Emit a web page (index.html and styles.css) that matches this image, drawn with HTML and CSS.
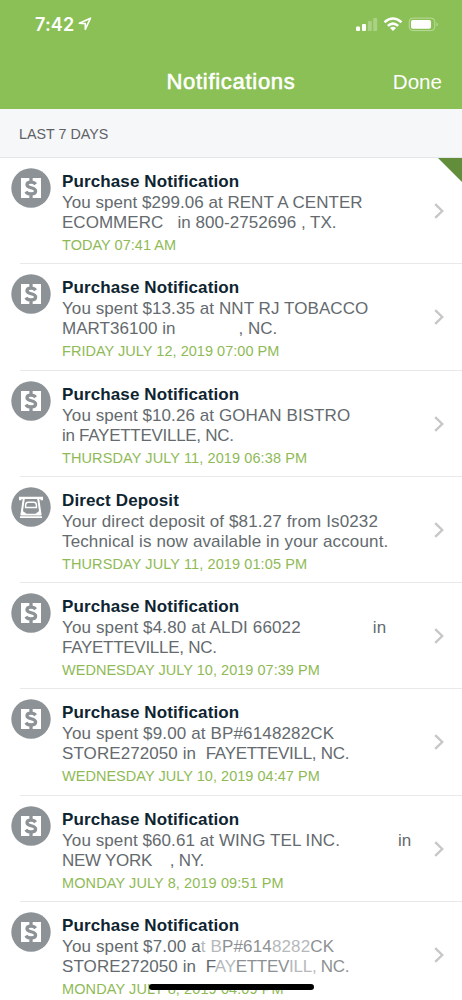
FILE: index.html
```html
<!DOCTYPE html>
<html lang="en">
<head>
<meta charset="utf-8">
<title>Notifications</title>
<link rel="stylesheet" href="styles.css">
</head>
<body>
<svg width="0" height="0" class="defs">
  <symbol id="purchase" viewBox="0 0 40 40">
    <circle cx="20" cy="20" r="19.7" fill="#8c9295"/>
    <path d="M10 10H30V30H10Z" fill="#fff"/>
    <path d="M24.6 16.2C23.5 14.6 22 14.1 20 14.1C17.6 14.1 16 15 16 16.8C16 20.6 24.6 18.9 24.6 23C24.6 25 22.6 26 20 26C17.6 26 15.9 25.2 14.9 23.6M20 9V14M20 26V31" fill="none" stroke="#8c9295" stroke-width="3.3"/>
  </symbol>
  <symbol id="deposit" viewBox="0 0 40 40">
    <circle cx="20" cy="20" r="19.7" fill="#8c9295"/>
    <path d="M8 9.7H32V13.2H29.5V12H10.5V13.2H8Z" fill="#fff"/>
    <path d="M12.8 11.5L10.4 28M27.2 11.5L29.6 28" stroke="#fff" stroke-width="2"/>
    <path d="M14.6 20.4V18Q14.8 15.2 17.2 15.2H22.8Q25.2 15.2 25.4 18V20.4Z" fill="none" stroke="#fff" stroke-width="1.5"/>
    <path d="M9.7 28.4L10.2 24.2H12.2L15.5 26.8H24.5L27.8 24.2H29.8L30.3 28.4ZM9 29.2H31V31H9Z" fill="#fff"/>
  </symbol>
  <symbol id="chevron" viewBox="0 0 10 16"><path d="M1.2 1.2L8.2 8L1.2 14.8" fill="none" stroke="#c7c7ca" stroke-width="2.4"/></symbol>
</svg>
<div class="screen">
  <header class="header">
    <div class="status">
      <span class="time">7:42</span>
      <svg class="location" viewBox="0 0 14 14"><path d="M1.3 6.3L12.5 1.2L7.3 12.3V6.6Z" fill="none" stroke="#fff" stroke-width="1.6" stroke-linejoin="round"/></svg>
      <svg class="indicators" viewBox="0 0 84 16">
        <g fill="#fff"><rect x="0" y="9.5" width="4" height="4.5" rx="1"/><rect x="6" y="7" width="4" height="7" rx="1"/>
        <g opacity=".28"><rect x="11.8" y="4" width="4" height="10" rx="1"/><rect x="17.2" y="1" width="4" height="13" rx="1"/></g></g>
        <g fill="none" stroke="#fff" stroke-width="2.5"><path d="M28.5 5.2Q37 -2.2 45.5 5.2"/><path d="M31.8 8.9Q37 4.3 42.2 8.9"/></g>
        <path d="M34 11Q37 8.5 40 11L37 14Z" fill="#fff"/>
        <rect x="53.2" y="1.1" width="25.6" height="12.5" rx="3.6" fill="none" stroke="#fff" opacity=".42"/>
        <rect x="55" y="3" width="20" height="8.8" rx="1.8" fill="#fff"/>
        <path d="M80.5 5.2Q83 7.4 80.5 9.6Z" fill="#fff" opacity=".45"/>
      </svg>
    </div>
    <div class="nav"><h1>Notifications</h1><span class="done">Done</span></div>
  </header>
  <h2 class="section">LAST 7 DAYS</h2>
  <main class="list">
    <article class="row unread"><svg class="icon"><use href="#purchase"/></svg><div class="copy"><h3>Purchase Notification</h3><p class="snug">You spent $299.06 at RENT A CENTER</p><p class="snug">ECOMMERC   in 800-2752696 , TX.</p><time>TODAY 07:41 AM</time></div><svg class="chevron"><use href="#chevron"/></svg></article>
    <article class="row"><svg class="icon"><use href="#purchase"/></svg><div class="copy"><h3>Purchase Notification</h3><p>You spent $13.35 at NNT RJ TOBACCO</p><p class="snug">MART36100 in<span class="gap town"></span>, NC.</p><time>FRIDAY JULY 12, 2019 07:00 PM</time></div><svg class="chevron"><use href="#chevron"/></svg></article>
    <article class="row"><svg class="icon"><use href="#purchase"/></svg><div class="copy"><h3>Purchase Notification</h3><p>You spent $10.26 at GOHAN BISTRO</p><p class="tight">in FAYETTEVILLE, NC.</p><time class="wide">THURSDAY JULY 11, 2019 06:38 PM</time></div><svg class="chevron"><use href="#chevron"/></svg></article>
    <article class="row"><svg class="icon"><use href="#deposit"/></svg><div class="copy"><h3>Direct Deposit</h3><p class="loose">Your direct deposit of $81.27 from Is0232</p><p class="loose">Technical is now available in your account.</p><time class="wide">THURSDAY JULY 11, 2019 01:05 PM</time></div><svg class="chevron"><use href="#chevron"/></svg></article>
    <article class="row"><svg class="icon"><use href="#purchase"/></svg><div class="copy"><h3>Purchase Notification</h3><p class="loose">You spent $4.80 at ALDI 66022<span class="gap aldi"></span>in</p><p class="tight">FAYETTEVILLE, NC.</p><time>WEDNESDAY JULY 10, 2019 07:39 PM</time></div><svg class="chevron"><use href="#chevron"/></svg></article>
    <article class="row"><svg class="icon"><use href="#purchase"/></svg><div class="copy"><h3>Purchase Notification</h3><p class="loose">You spent $9.00 at BP#6148282CK</p><p>STORE272050 in  <span class="tight">FAYETTEVILL, NC.</span></p><time>WEDNESDAY JULY 10, 2019 04:47 PM</time></div><svg class="chevron"><use href="#chevron"/></svg></article>
    <article class="row"><svg class="icon"><use href="#purchase"/></svg><div class="copy"><h3>Purchase Notification</h3><p>You spent $60.61 at WING TEL INC.<span class="gap wing"></span>in</p><p class="tight">NEW YORK    , NY.</p><time class="wide">MONDAY JULY 8, 2019 09:51 PM</time></div><svg class="chevron"><use href="#chevron"/></svg></article>
    <article class="row"><svg class="icon"><use href="#purchase"/></svg><div class="copy"><h3>Purchase Notification</h3><p class="loose">You spent $7.00 a<span class="faint">t B</span><span class="faded">P#614</span><span class="faint">8282</span><span class="faded">CK</span></p><p>STORE272050 in  <span class="tight">F<span class="faint">AY</span><span class="faded">ETTEV</span><span class="faint">ILL,</span><span class="faded"> NC.</span></span></p><time class="wide">MONDAY JULY 8, 2019 04:09 PM</time></div><svg class="chevron"><use href="#chevron"/></svg></article>
  </main>
  <div class="home"></div>
</div>
</body>
</html>
```

FILE: styles.css
```css
* { box-sizing: border-box; }
body { margin: 0; font-family: "Liberation Sans", Arial, sans-serif; background: #fff; }
h1, h2, h3, p { margin: 0; font-weight: 400; }
.defs { position: absolute; }
.screen { position: relative; width: 462px; height: 1000px; overflow: hidden; }
.header { height: 109px; background: #8ac055; color: #fff; }
.status { display: flex; align-items: flex-start; height: 55px; padding: 14px 22px 0 35px; }
.time { font: 600 18px/22px Inter, sans-serif; letter-spacing: .15px; }
.location { width: 14px; height: 14px; margin: 3px 0 0 4px; }
.indicators { width: 84px; height: 16px; margin: 3px 0 0 auto; }
.nav { display: grid; grid-template-columns: 1fr auto 1fr; align-items: center; height: 53px; padding-right: 20px; }
.nav h1 { grid-column: 2; font: 500 22px/26px "Liberation Sans", sans-serif; -webkit-text-stroke: .6px #fff; letter-spacing: .7px; margin-left: 20px; }
.done { justify-self: end; font-size: 20.6px; line-height: 26px; }
.section { height: 49px; padding: 1px 0 0 19px; border-bottom: 1px solid #e4e7e9; background: #f6f7f9; color: #5e6266; font-size: 14.3px; line-height: 49px; }
.row { position: relative; display: flex; align-items: flex-start; height: 106.3px; padding: 10px 18px 0 11px; }
.row::after { content: ""; position: absolute; left: 20px; right: 0; bottom: 0; height: 1px; background: #e7e9ea; }
.unread::before { content: ""; position: absolute; top: 0; right: 0; width: 24px; height: 24px; background: #628e3c; clip-path: polygon(0 0, 100% 0, 100% 100%); }
.icon { flex: none; width: 40px; height: 40px; }
.copy { flex: 1; padding: 3px 0 0 11px; white-space: pre; }
.copy h3 { color: #0e2430; font-weight: 700; font-size: 17px; line-height: 22px; letter-spacing: .12px; }
.copy p { color: #646a6e; font-size: 17px; line-height: 20px; letter-spacing: .08px; }
.copy p.snug { letter-spacing: .03px; }
.copy p.loose { letter-spacing: .14px; }
.copy .tight { letter-spacing: -.28px; }
.copy time { display: block; margin-top: 2px; color: #8fba56; font-size: 14.5px; line-height: 20px; letter-spacing: .03px; }
.copy time.wide { letter-spacing: .1px; }
.gap { display: inline-block; }
.town { width: 63px; }
.aldi { width: 72px; }
.wing { width: 58px; }
.faded { color: #8d9193; }
.faint { color: #b6b9bb; }
.chevron { flex: none; width: 10px; height: 16px; margin-top: 35px; }
.home { position: absolute; left: 149px; top: 984px; width: 165px; height: 6px; border-radius: 3px; background: #000; }
```
